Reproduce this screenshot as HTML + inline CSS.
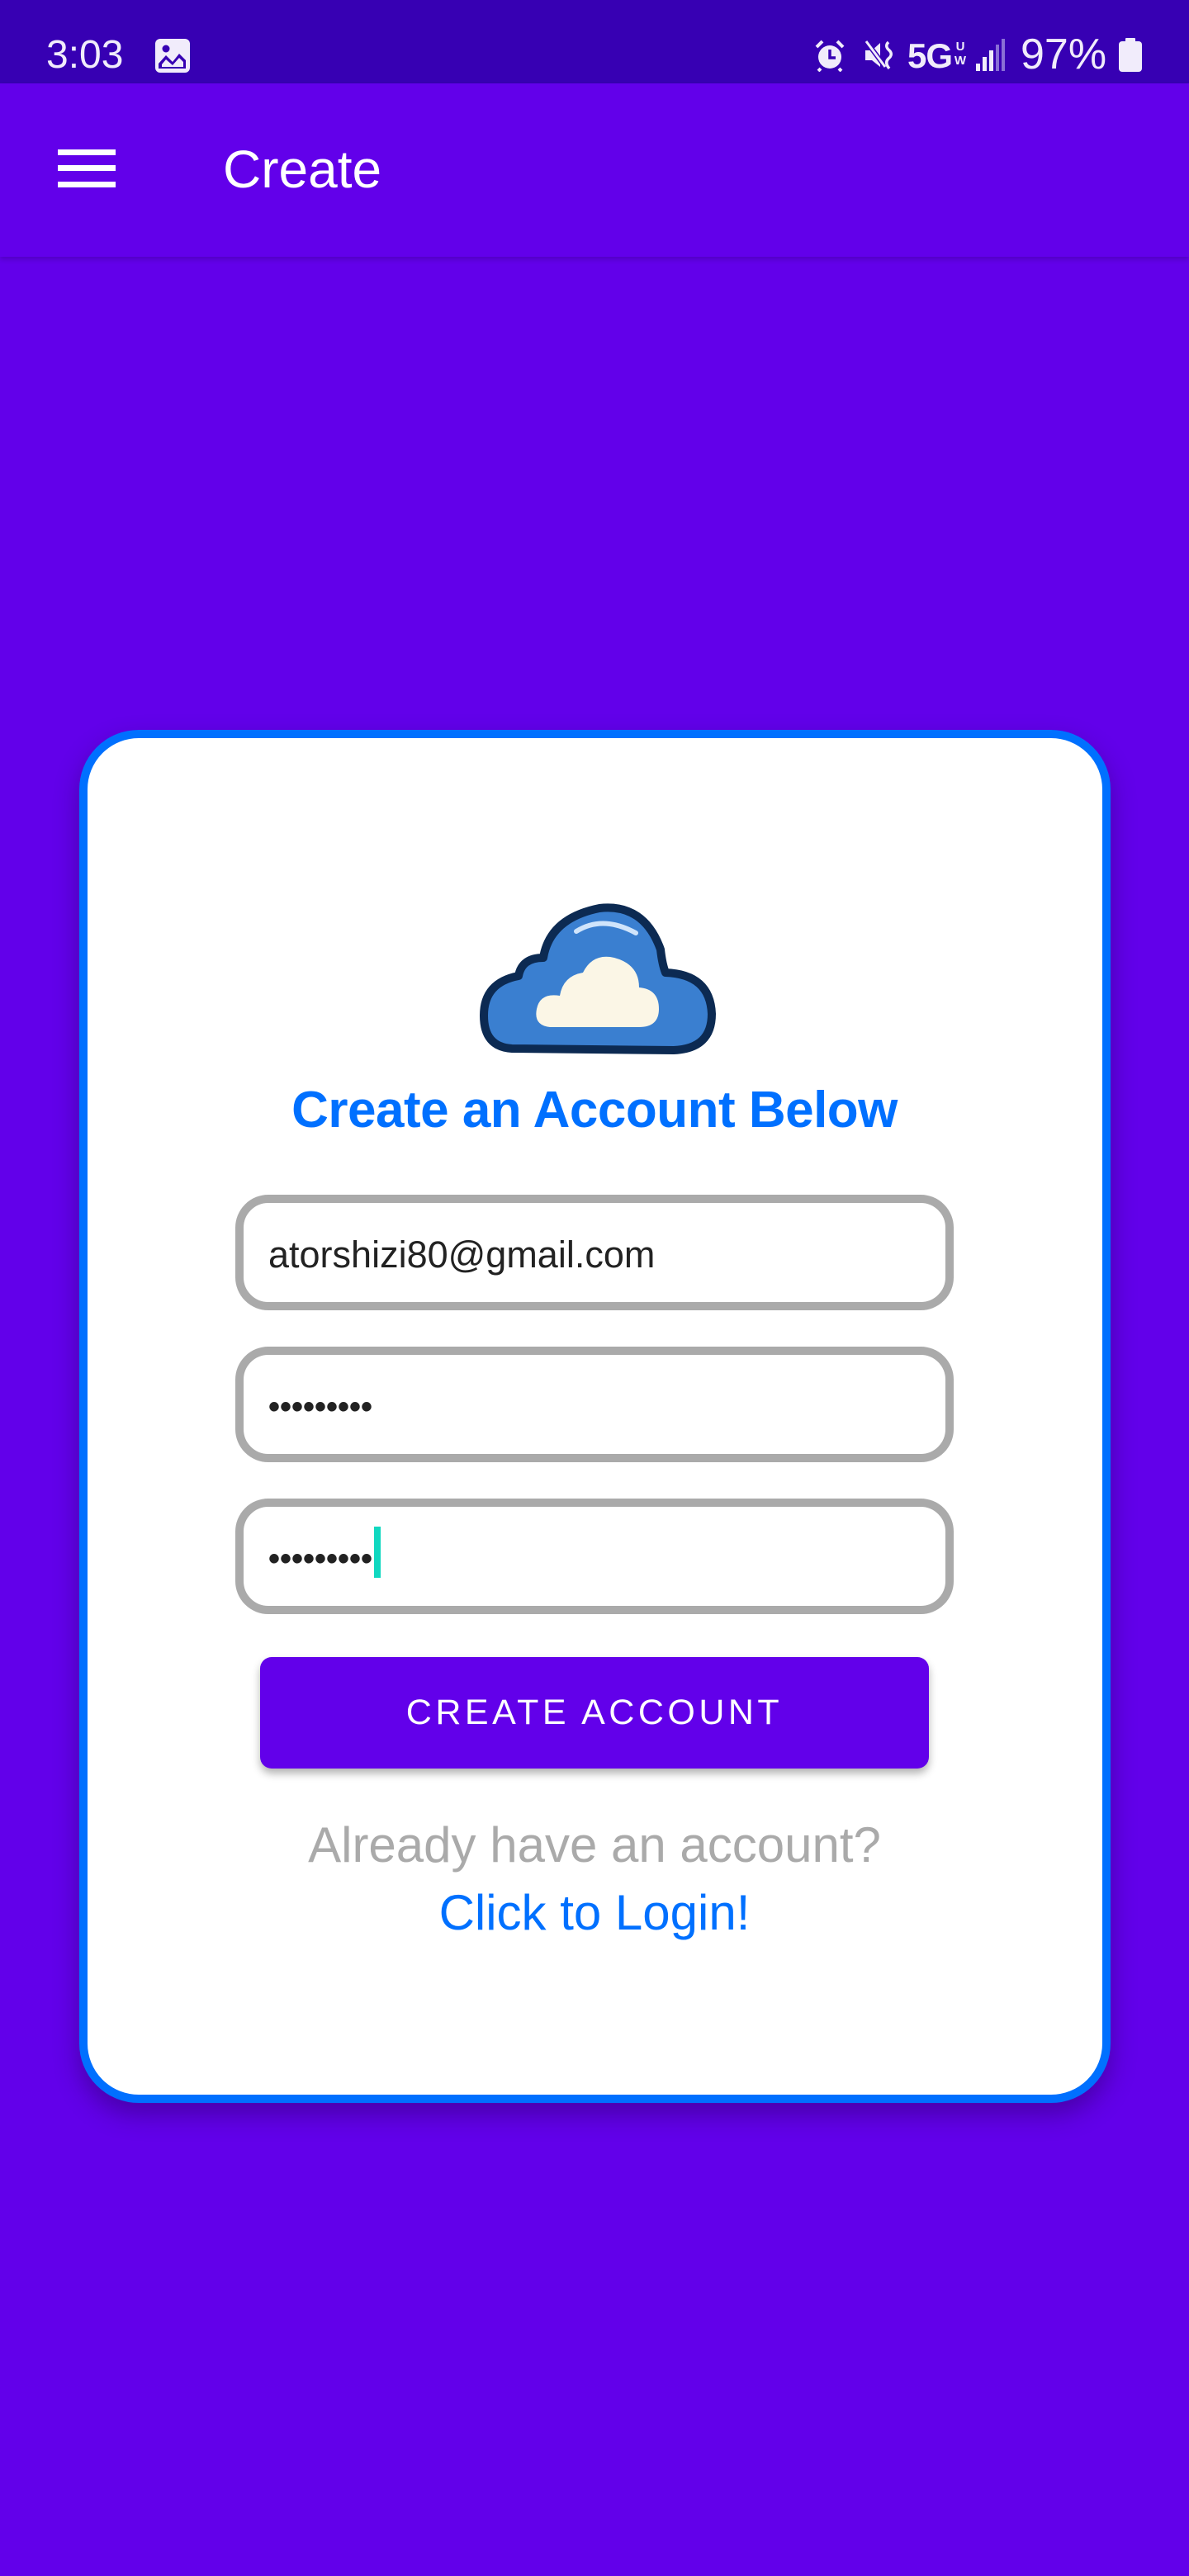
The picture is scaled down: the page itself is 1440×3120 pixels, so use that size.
<!DOCTYPE html>
<html><head><meta charset="utf-8">
<style>
*{margin:0;padding:0;box-sizing:border-box}
body{width:1440px;height:3120px;background:#6200ea;font-family:"Liberation Sans",sans-serif;position:relative;overflow:hidden}
.sb{position:absolute;left:0;top:0;width:1440px;height:101px;background:#3700b3;color:#f1ecfb}
.tb{position:absolute;left:0;top:101px;width:1440px;height:210px;background:#6200ea;box-shadow:0 3px 6px rgba(0,0,0,.18)}
.abs{position:absolute}
.card{position:absolute;left:96px;top:884px;width:1249px;height:1663px;background:#fff;border:10px solid #0070ff;border-radius:72px;box-shadow:0 14px 30px rgba(40,0,90,.45)}
.inp{position:absolute;left:285px;width:870px;height:140px;border:10px solid #aaaaaa;border-radius:40px;background:#fff}
.inp span{position:absolute;left:30px;top:38px;font-size:45px;color:#222;line-height:50px}
.dots{font-weight:bold;font-size:40px!important;top:38px!important;letter-spacing:0}
</style></head><body>
<div class="sb">
  <div class="abs" style="left:56px;top:39px;font-size:48px;line-height:56px">3:03</div>
  <svg class="abs" style="left:188px;top:47px" width="42" height="41" viewBox="0 0 42 41"><rect x="0" y="0" width="42" height="41" rx="6" fill="#f1ecfb"/><circle cx="13" cy="12" r="4.5" fill="#3700b3"/><path d="M4 36 L4 30 L13 20 L21 28 L29 18 L37 26 L37 36 Z" fill="#3700b3"/><path d="M8 34 L8 31 L13 25 L21 32 L29 23 L34 28 L34 34Z" fill="#f1ecfb"/></svg>
  <svg class="abs" style="left:986px;top:47px" width="38" height="40" viewBox="0 0 38 40"><circle cx="19" cy="22" r="14" fill="#f1ecfb"/><path d="M3 10 L10 3 M35 10 L28 3 M8 36 L5 39 M30 36 L33 39" stroke="#f1ecfb" stroke-width="4"/><path d="M19 13 V23 H26" stroke="#3700b3" stroke-width="3.5" fill="none"/></svg>
  <svg class="abs" style="left:1046px;top:47px" width="40" height="40" viewBox="0 0 40 40"><path d="M2 14 H10 L20 5 V34 L10 26 H2Z" fill="#f1ecfb"/><path d="M3 3 L26 34" stroke="#3700b3" stroke-width="6"/><path d="M3 3 L26 34" stroke="#f1ecfb" stroke-width="3"/><path d="M30 4 Q25 9 31 14 Q36 19 30 24 Q25 29 31 36" stroke="#f1ecfb" stroke-width="3.5" fill="none"/></svg>
  <div class="abs" style="left:1099px;top:44px;font-size:42px;font-weight:bold;line-height:48px;letter-spacing:-1px">5G</div>
  <div class="abs" style="left:1155px;top:48px;font-size:15px;font-weight:bold;line-height:17px;width:16px;text-align:center">U<br>W</div>
  <svg class="abs" style="left:1182px;top:47px" width="36" height="40" viewBox="0 0 36 40"><rect x="0" y="30" width="5" height="9" fill="#f1ecfb"/><rect x="8" y="22" width="5" height="17" fill="#f1ecfb"/><rect x="16" y="14" width="5" height="25" fill="#f1ecfb"/><rect x="24" y="7" width="4" height="32" fill="#8a6fd6"/><rect x="31" y="0" width="4" height="39" fill="#8a6fd6"/></svg>
  <div class="abs" style="left:1236px;top:36px;font-size:52px;line-height:60px">97%</div>
  <svg class="abs" style="left:1355px;top:46px" width="28" height="41" viewBox="0 0 28 41"><rect x="8" y="0" width="12" height="5" rx="1" fill="#f1ecfb"/><rect x="0" y="4" width="28" height="37" rx="4" fill="#f1ecfb"/></svg>
</div>
<div class="tb">
  <div class="abs" style="left:70px;top:80px;width:70px;height:7px;background:#fff"></div>
  <div class="abs" style="left:70px;top:99px;width:70px;height:7px;background:#fff"></div>
  <div class="abs" style="left:70px;top:119px;width:70px;height:7px;background:#fff"></div>
  <div class="abs" style="left:270px;top:68px;font-size:64px;color:#fff;line-height:72px">Create</div>
</div>
<div class="card"></div>
<svg class="abs" style="left:580px;top:1090px" width="288" height="188" viewBox="0 0 288 188">
  <path d="M40 180 Q6 178 6 140 Q6 100 48 92 Q52 70 78 70 Q86 22 146 10 Q200 4 220 60 Q222 78 226 88 Q280 90 282 138 Q282 180 236 182 Z" fill="#3a7fd0" stroke="#0c2a52" stroke-width="10" stroke-linejoin="round"/>
  <path d="M118 38 Q150 18 190 40" stroke="#cfe4fb" stroke-width="6" fill="none" stroke-linecap="round"/>
  <path d="M86 154 Q66 152 70 132 Q74 112 98 116 Q102 92 126 88 Q138 64 164 70 Q194 78 194 106 Q218 108 218 132 Q218 154 194 154 Z" fill="#fbf6e6"/>
</svg>
<div class="abs" style="left:0;width:1440px;top:1308px;text-align:center;font-size:62px;font-weight:bold;color:#0070ff;line-height:74px;letter-spacing:-0.5px">Create an Account Below</div>
<div class="inp" style="top:1447px"><span>atorshizi80@gmail.com</span></div>
<div class="inp" style="top:1631px"><span class="dots">•••••••••</span></div>
<div class="inp" style="top:1815px"><span class="dots">•••••••••</span><div class="abs" style="left:158px;top:24px;width:8px;height:62px;background:#10d8c0"></div></div>
<div class="abs" style="left:315px;top:2007px;width:810px;height:135px;background:#6200ea;border-radius:14px;box-shadow:0 6px 10px rgba(0,0,0,.3);color:#fff;font-size:43px;text-align:center;line-height:135px;letter-spacing:4.5px">CREATE ACCOUNT</div>
<div class="abs" style="left:0;width:1440px;top:2200px;text-align:center;font-size:60px;color:#aaaaaa;line-height:70px">Already have an account?</div>
<div class="abs" style="left:0;width:1440px;top:2282px;text-align:center;font-size:60px;color:#0070ff;line-height:70px">Click to Login!</div>
</body></html>
